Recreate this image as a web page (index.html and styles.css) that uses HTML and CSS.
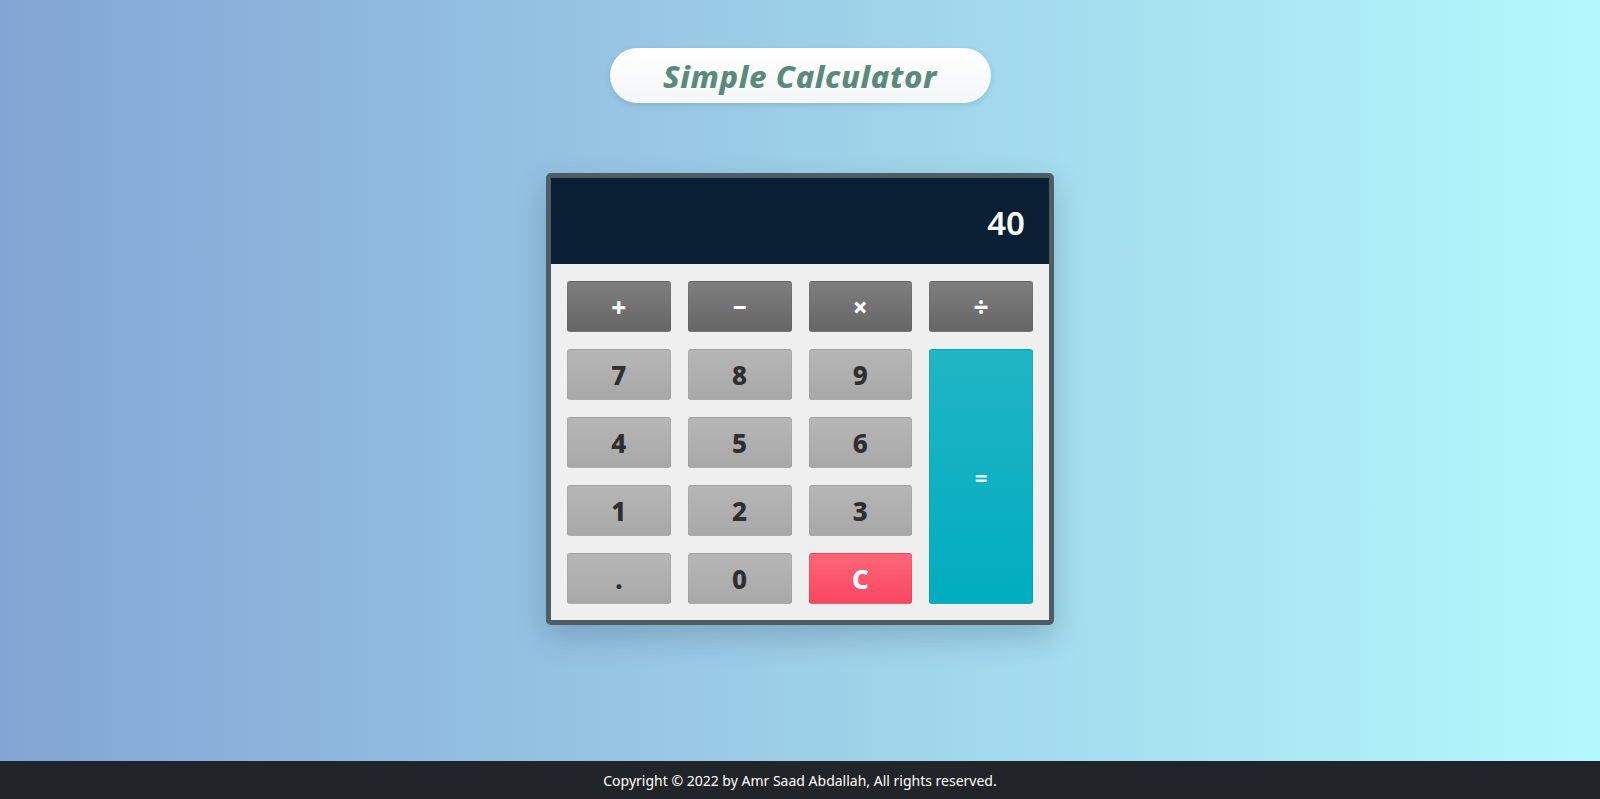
FILE: index.html
```html
<!DOCTYPE html>
<html lang="en">
<head>
<meta charset="utf-8">
<title>Simple Calculator</title>
<link rel="stylesheet" href="styles.css">
</head>
<body>
<main class="page">
  <h1 class="title">Simple Calculator</h1>
  <div class="calc">
    <div class="display">40</div>
    <div class="keys">
      <button class="key op">+</button>
      <button class="key op minus">&minus;</button>
      <button class="key op">&times;</button>
      <button class="key op">&divide;</button>
      <button class="key num">7</button>
      <button class="key num">8</button>
      <button class="key num">9</button>
      <button class="key eq">=</button>
      <button class="key num">4</button>
      <button class="key num">5</button>
      <button class="key num">6</button>
      <button class="key num">1</button>
      <button class="key num">2</button>
      <button class="key num">3</button>
      <button class="key num">.</button>
      <button class="key num">0</button>
      <button class="key clr">C</button>
    </div>
  </div>
</main>
<footer class="footer">Copyright &copy; 2022 by Amr Saad Abdallah, All rights reserved.</footer>
</body>
</html>
```

FILE: styles.css
```css
* { box-sizing: border-box; }
html, body { margin: 0; height: 100%; }
body {
  font-family: "Noto Sans", "Open Sans", sans-serif;
  background: linear-gradient(90deg, #83a5d5 0%, #9acbe6 45%, #b4f9fc 100%);
  display: flex;
  flex-direction: column;
  min-height: 799px;
}
.page {
  flex: 1;
  display: flex;
  flex-direction: column;
  align-items: center;
  padding-top: 48px;
}
.title {
  margin: 0;
  width: 381px;
  height: 55px;
  border-radius: 28px;
  background: linear-gradient(180deg, #ffffff, #f4f6f7);
  box-shadow: 0 2px 6px rgba(0, 0, 0, 0.12);
  display: flex;
  align-items: center;
  justify-content: center;
  font-size: 31px;
  font-style: italic;
  font-weight: 800;
  color: #5b8a7d;
  letter-spacing: 0.6px;
}
.calc {
  margin-top: 70px;
  width: 508px;
  border: 5px solid #4e5d64;
  border-radius: 5px;
  background: #efefef;
  box-shadow: 0 12px 30px rgba(40, 60, 80, 0.25);
}
.display {
  height: 86px;
  background: #0a1f33;
  color: #ffffff;
  font-size: 33px;
  font-weight: 600;
  display: flex;
  align-items: center;
  justify-content: flex-end;
  padding-right: 24px;
  padding-top: 2px;
}
.keys {
  display: grid;
  grid-template-columns: repeat(4, 1fr);
  grid-template-rows: repeat(5, 51px);
  gap: 17px;
  padding: 17px 16px 16px 16px;
}
.key {
  border: 1px solid rgba(0, 0, 0, 0.05);
  border-radius: 3px;
  font-family: inherit;
  font-size: 26px;
  font-weight: 800;
  padding: 0;
  cursor: pointer;
  line-height: 1;
}
.op {
  background: linear-gradient(180deg, #7e7e7e, #666666);
  color: #ffffff;
}
.minus { font-size: 24px; }
.num {
  background: linear-gradient(180deg, #b6b6b6, #a8a8a8);
  color: #2f2f2f;
}
.clr {
  background: linear-gradient(180deg, #fd6779, #f84662);
  color: #ffffff;
}
.eq {
  grid-column: 4;
  grid-row: 2 / 6;
  background: linear-gradient(180deg, #20b5c4, #00adc0);
  color: #e9f8fa;
  font-size: 22px;
}
.footer {
  height: 38px;
  background: #212428;
  color: #ffffff;
  font-size: 14px;
  display: flex;
  align-items: center;
  justify-content: center;
}
```
